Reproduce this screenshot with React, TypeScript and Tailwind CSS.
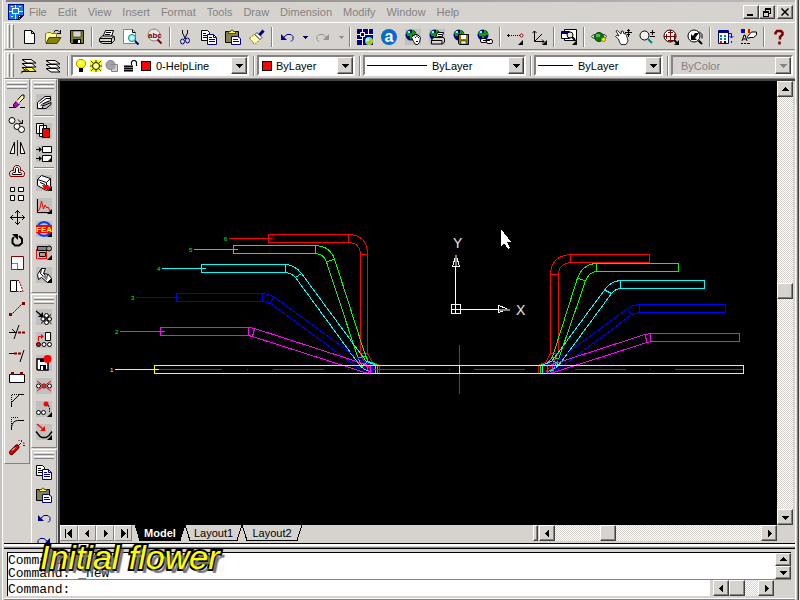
import type { ReactNode } from "react";

const RAISED =
  "border border-t-white border-l-white border-r-[#424142] border-b-[#424142] bg-[#d6d3ce] shadow-[inset_-1px_-1px_#848284]";
const TRACK =
  "bg-[repeating-conic-gradient(#ffffff_0_25%,#d6d3ce_0_50%)] bg-[length:2px_2px]";

const corner = <path d="M16 11v5h-5z" fill="#000" />;
const grey = <path d="M0 0h16v16H0z" fill="#c0c0c0" />;
const globe = (
  <>
    <circle cx="6" cy="6" r="5.5" fill="#000084" />
    <path d="M2 2h3v2h4v3H7v3H5V7H2V5H1V4zM8 1l3 3v2H9V4H7V1z" fill="#00a300" />
    <path d="M3 2h2v2H3z" fill="#8ff" />
  </>
);

const ICONS: Record<string, ReactNode> = {
  New: <path d="M3.5 1.5h7l3 3v10h-10zM10.5 1.5v3h3" fill="#fff" stroke="#000" />,
  Open: (
    <>
      <path d="M.5 13.500v-9h1l1-1h3l1 1h5v4" fill="#ffff9c" stroke="#848200" />
      <path d="M1 14.500l3-6h12l-4 6z" fill="#848200" stroke="#424100" />
      <path d="M9 3.500l1-2h3l2 2M15.5 1v4M12 4.500h4" fill="none" stroke="#000" />
    </>
  ),
  Save: (
    <>
      <path d="M1.5 1.5h13v13h-12l-1-1z" fill="#848200" stroke="#000" />
      <path d="M4 2h8v6H4z" fill="#d6d3ce" stroke="#000" strokeWidth=".5" />
      <path d="M4 10h8v5H4z" fill="#000" />
      <path d="M9 11h2v3H9z" fill="#fff" />
    </>
  ),
  Print: (
    <>
      <path d="M4 7.500l2.5-6h8l-2 6z" fill="#fff" stroke="#000" />
      <path d="M7 3.500h5M6 5.500h5" stroke="#000" />
      <path d="M.5 9.500l3-2.500h11l1 1.500v3l-3 3h-9l-3-2z" fill="#d6d3ce" stroke="#000" />
      <path d="M1 9.500h11.500v5M1 12.500h11M12.5 9.500l3-2" stroke="#000" fill="none" />
      <path d="M6 10.500h3v1H6z" fill="#ff0" />
    </>
  ),
  "Print preview": (
    <>
      <path d="M.5.5h9l3 3v11H.5z" fill="#fff" stroke="#848284" />
      <path d="M9.5.5v3h3" fill="none" stroke="#000" />
      <circle cx="9" cy="9" r="3.5" fill="#9ff" stroke="#008284" />
      <path d="M8 8h2v2H8z" fill="#fff" />
      <path d="M12 12l3.500 3.500" stroke="#000084" strokeWidth="2" />
    </>
  ),
  "Find and replace": (
    <>
      <circle cx="7" cy="6" r="6" fill="#e8e6e2" stroke="#848284" />
      <path d="M10.5 10.500l4 4" stroke="#840000" strokeWidth="2" />
      <text x="1" y="9" fontSize="8" fontWeight="700" fill="#840000">abc</text>
    </>
  ),
  Cut: (
    <>
      <path d="M5.5 1v3l3 6M10.5 1v3l-3 6" stroke="#000" fill="none" />
      <ellipse cx="5.500" cy="12.500" rx="2" ry="2.500" fill="none" stroke="#000084" />
      <ellipse cx="10.500" cy="11.500" rx="2" ry="2.500" fill="none" stroke="#000084" />
    </>
  ),
  Copy: (
    <>
      <path d="M.5 1.500h6l2 2v8h-8z" fill="#fff" stroke="#000" />
      <path d="M2 4.500h3M2 6.500h4M2 8.500h4" stroke="#000" />
      <path d="M6.500 5.500h6l3 3v7h-9z" fill="#fff" stroke="#000084" />
      <path d="M12.500 5.500v3h3M8 8.500h3M8 10.500h6M8 12.500h6" stroke="#000084" fill="none" />
    </>
  ),
  Paste: (
    <>
      <path d="M.5 2.500h13v11H.5z" fill="#84824a" stroke="#000" />
      <path d="M3.500 4.500v-2h2l1-1.500h1l1 1.500h2v2z" fill="#ff0" stroke="#424142" />
      <path d="M6.500 7.500h6l3 2v6h-9z" fill="#fff" stroke="#000084" />
      <path d="M8 10.500h5M8 12.500h6" stroke="#000084" />
    </>
  ),
  "Match properties": (
    <>
      <path d="M.5 9l5-3.500 5 5-4 4.500h-2L4 12.500 2.500 12z" fill="#ffffb5" stroke="#848200" strokeDasharray="2 1" />
      <path d="M6 5.500l2-2 5 5-2 2z" fill="#fff" stroke="#424142" />
      <path d="M10.500 6l4-4.500" stroke="#000084" strokeWidth="3" />
    </>
  ),
  Undo: (
    <>
      <path d="M2 5v6h6z" fill="#000084" />
      <path d="M4.500 8.500l3.500-3h4l2 2v3l-2 2" fill="none" stroke="#000084" />
    </>
  ),
  Redo: (
    <>
      <path d="M14 5v6H8z" fill="#949294" />
      <path d="M11.500 8.500L8 5.500H4l-2 2v3l2 2" fill="none" stroke="#949294" />
    </>
  ),
  RedoBlue: (
    <>
      <path d="M14 5v6H8z" fill="#000084" />
      <path d="M11.500 8.500L8 5.500H4l-2 2v3l2 2" fill="none" stroke="#000084" />
    </>
  ),
  Today: (
    <>
      <path d="M0 0h16v16H0z" fill="#000084" />
      <path d="M0 5.500h3M5.500 0v3M3.500 3.500h4v4h-4zM8 5.500h8M11.500 0v5M5.500 8v8M0 10.500h5" fill="none" stroke="#fff" />
      <circle cx="12" cy="12" r="4" fill="#7fe36b" />
      <path d="M9 14l6-5v4l-2 3z" fill="#d6b400" />
      <path d="M9 9h3v3H9z" fill="#8ff" />
    </>
  ),
  "Point A": (
    <>
      <circle cx="8" cy="8" r="8" fill="#0869ce" />
      <text x="8" y="13" fontSize="16" fontWeight="700" textAnchor="middle" fill="#fff">a</text>
    </>
  ),
  Meet: (
    <>
      {grey}
      {globe}
      <path d="M6.500 8.500l3-3h3l3 3-1 5-2 2h-2l-2-3z" fill="#fff" stroke="#000" />
      <path d="M10 8.500h1M13 8.500h1M11 12.500h2M7 6l3 1M12 6v2" stroke="#000" />
    </>
  ),
  Publish: (
    <>
      {grey}
      {globe}
      <path d="M6.500 9l2-5.500h6l-2 5.500z" fill="#fff" stroke="#000" />
      <path d="M9 5.500h4M8.500 7.500h4" stroke="#000" />
      <path d="M2.500 11l2-2.500h10l1 1.500v3l-2 2h-11z" fill="#d6d3ce" stroke="#000" />
      <path d="M3 11.500h10v3.500" stroke="#000" fill="none" />
      <path d="M5 12h4v1H5z" fill="#ff0" />
    </>
  ),
  eTransmit: (
    <>
      {globe}
      <path d="M5.500 5.500h10v10h-9l-1-1z" fill="#848200" stroke="#000" />
      <path d="M8 6h5v4H8z" fill="#fff" />
      <path d="M8 12h5v3H8z" fill="#fff" stroke="#000" strokeWidth=".5" />
    </>
  ),
  Hyperlink: (
    <>
      {globe}
      <rect x="3.500" y="9.500" width="6" height="4" rx="1.500" fill="#fff" stroke="#000" />
      <rect x="9.500" y="10.500" width="6" height="4" rx="1.500" fill="#fff" stroke="#000" />
      <path d="M6 11.500h7" stroke="#000" />
    </>
  ),
  "Temporary track": (
    <>
      <path d="M0 6.500h3M1.500 5v3" stroke="#000" />
      <path d="M4 6.500h9" stroke="#000" strokeDasharray="1 1" />
      <circle cx="14.500" cy="6.500" r="1.500" fill="#fff" stroke="#840000" />
      {corner}
    </>
  ),
  UCS: (
    <>
      <path d="M3.500 2v10.500H13M4 12l7-7M1.500 4l2-2 2 2M11 10.500l2 2-2 2" fill="none" stroke="#000" />
      {corner}
    </>
  ),
  "Named views": (
    <>
      <path d="M3.500.5h12v11h-12z" fill="#fff" stroke="#000" />
      <path d="M.5 2.500h8v7h-8z" fill="#fff" stroke="#000" />
      <path d="M1 3h7v2H1z" fill="#000084" />
      <circle cx="9" cy="6" r="3" fill="#e8e6e2" stroke="#000" />
      <path d="M11 8l3 3" stroke="#000" strokeWidth="2" />
      {corner}
    </>
  ),
  "3D orbit": (
    <>
      <circle cx="8" cy="8" r="4.500" fill="#008200" stroke="#004100" />
      <path d="M5 5h4v3H5z" fill="#42c342" />
      <ellipse cx="8" cy="7.500" rx="7.500" ry="2.500" fill="none" stroke="#424142" strokeDasharray="9 4" />
      <circle cx="12.500" cy="10.500" r="2" fill="#ff0" stroke="#848200" />
    </>
  ),
  Pan: (
    <>
      <path d="M3.500 10L.5 7.500 2 6l2 1-3-5 1.500-.5L6 5l.500-3L8 2l1 3 1.500-.5L12 8l1 4-2 3.500H6L4.500 13z" fill="#fff" stroke="#000" strokeWidth=".8" />
      <path d="M13.500 0v8M10 3.500h7M12 1.500h3M12 5.500h3" stroke="#000" />
    </>
  ),
  "Zoom realtime": (
    <>
      <circle cx="5.500" cy="6.500" r="4.500" fill="#f4f2ee" stroke="#000" />
      <path d="M9 10l4 4" stroke="#008284" strokeWidth="2" />
      <path d="M11 3.500h5M13.500 1v5M11 7.500h5" stroke="#000" />
    </>
  ),
  "Zoom window": (
    <>
      <circle cx="7" cy="7" r="6" fill="#fff" stroke="#000" />
      <path d="M11 11l3 3" stroke="#000" strokeWidth="2" />
      <path d="M7.500 1v12M1 7.500h12M3.500 5v5M11.500 5v5M5 3.500h5M5 11.500h5" stroke="#840000" fill="none" />
      {corner}
    </>
  ),
  "Zoom previous": (
    <>
      <circle cx="7" cy="7" r="6" fill="#fff" stroke="#000" />
      <path d="M4 5v6h6L8 9l4-5H8L6 7z" fill="#000" />
      <path d="M11.500 11.500l3.500 3.500" stroke="#000" strokeWidth="2" />
      <path d="M12 2.500l3 3v4" stroke="#000" fill="none" />
    </>
  ),
  DesignCenter: (
    <>
      <path d="M1.500 1.500h10v13h-10z" fill="#fff" stroke="#000084" />
      <path d="M2 2h9v2H2z" fill="#000084" />
      <path d="M3 6h2v2H3zM7 6h2v2H7zM3 9h2v2H3zM7 9h2v2H7z" fill="#008284" />
      <path d="M3 12h2v2H3z" fill="red" />
      <path d="M7 12h2v2H7z" fill="#000" />
      <path d="M12 4.500h2.500v4M12.500 7l2 2 2-2M14.500 12v2" stroke="#00f" fill="none" />
    </>
  ),
  Properties: (
    <>
      <path d="M0 0h4v4H0z" fill="#00f" />
      <path d="M4 0h3v4H4z" fill="#ff0" />
      <path d="M7 0h2v4H7z" fill="red" />
      <path d="M6.500 7.500l4-4.500h5v3l-3 2.500H9l-2 1z" fill="#fff" stroke="#000" />
      <path d="M1 12l2-6h1l2 6M2 10h3M0 14.500h2M3 14.500h2M6 14.500h3" stroke="#000" fill="none" />
    </>
  ),
  Help: (
    <path d="M4.500 5.500V4l1.500-2h4l1.500 1.500v2L9 8v2.500M8.500 12.500v3" fill="none" stroke="#840000" strokeWidth="2.500" />
  ),
  Layers: (
    <>
      <path d="M4.500 10.500l4 3h-8M1 9.500h10l4 4H6z" fill="#ff0" stroke="#000" />
      <path d="M1 5.500h10l4 3.500H6z" fill="#fff" stroke="#000" />
      <path d="M1 1.500h9l5 3.500H6z" fill="#fff" stroke="#000" />
      <path d="M0 15.500l4-4" stroke="#000" />
    </>
  ),
  "Layer previous": (
    <>
      <path d="M1 10.500h10l4 3.500H6z" fill="#fff" stroke="#000" />
      <path d="M1 6.500h10l4 3.500H6z" fill="#fff" stroke="#000" />
      <path d="M1 2.500h9l5 3.500H6z" fill="#fff" stroke="#000" />
    </>
  ),
  Erase: (
    <>
      <path d="M0 13.500h5M11 13.500h5" stroke="#000" />
      <path d="M8 6.500l5-5.500h2v3l-5 5z" fill="#ffff84" stroke="#000" />
      <path d="M4.500 10.500l3-3.500 3 3-3.500 3.500h-2z" fill="#c600c6" stroke="#000" />
      <path d="M7.500 6.500l3 3" stroke="#fff" strokeWidth="1.500" />
    </>
  ),
  "Copy object": (
    <>
      <circle cx="3" cy="3.500" r="3" fill="#fff" stroke="#000" />
      <circle cx="8" cy="9.500" r="3" fill="#fff" stroke="#000" />
      <circle cx="12.500" cy="12.500" r="3" fill="#fff" stroke="#000" />
      <path d="M9 2.500l4 4M13.500 3v3.500H10" stroke="#000" fill="none" />
    </>
  ),
  Mirror: (
    <>
      <path d="M1 13.500h4.500V2zM16 13.500h-4.500V2z" fill="#fff" stroke="#000" />
      <path d="M8.500 0v16" stroke="#840000" />
    </>
  ),
  Offset: (
    <>
      <path d="M1.500 13.500l-1-2v-2l2-2h2V4.500l2-2h3l2 2v3h2l2 2v2l-1 2z" fill="none" stroke="#840000" />
      <path d="M3.500 11.500v-1l1-1h2v-4l1-1h1l1 1v4h2l1 1v1z" fill="#fff" stroke="#000" />
    </>
  ),
  Array: <path d="M1.500 1.500h4v4h-4zM9.500 1.500h5v4h-5zM1.500 9.500h4v5h-4zM9.500 9.500h5v5h-5z" fill="#fff" stroke="#000" />,
  Move: (
    <path d="M8.500 1v15M1 8.500h15M6 4l2.500-2.500L11 4M6 13l2.500 2.500L11 13M4 6L1.500 8.500 4 11M13 6l2.500 2.500L13 11" fill="none" stroke="#000" />
  ),
  Rotate: (
    <>
      <path d="M5 5L3.500 7v4L6 13.500h4l3-2.500V7l-3-3" fill="none" stroke="#000" strokeWidth="2" />
      <path d="M3 2h6v6z" fill="#000" />
    </>
  ),
  Scale: (
    <>
      <path d="M2.500 1.500h12v13h-12z" fill="#fff" stroke="#840000" />
      <path d="M2.500 8.500h6v6h-6z" fill="#fff" stroke="#000" strokeDasharray="1 1" />
    </>
  ),
  Stretch: (
    <>
      <path d="M1.500 2.500h6v11h-6z" fill="#fff" stroke="#000" />
      <path d="M8 2.500h2l4 11H8" fill="#fff" stroke="#840000" strokeDasharray="2 1" />
    </>
  ),
  Lengthen: (
    <>
      <path d="M2 14L14 2" stroke="#000" strokeDasharray="2 1" />
      <path d="M0 12h3v3H0zM13 1h3v3h-3z" fill="#840000" />
    </>
  ),
  Trim: (
    <>
      <path d="M0 8.500h8M5 15l5-14M3 5l4 4" stroke="#000" fill="none" />
      <path d="M9 8.500h7" stroke="#840000" strokeWidth="2" strokeDasharray="3 1" />
    </>
  ),
  Extend: (
    <>
      <path d="M0 6.500h5M11 15l4-12" stroke="#000" fill="none" />
      <path d="M5 6.500h7" stroke="#840000" strokeWidth="2" strokeDasharray="3 1" />
    </>
  ),
  Break: (
    <>
      <path d="M.5 4.500h15v8H.5z" fill="#fff" stroke="#000" />
      <path d="M2 2h3v3H2zM11 2h3v3h-3z" fill="#840000" />
    </>
  ),
  Chamfer: (
    <>
      <path d="M2.500 14V9.500l8-8H15" fill="none" stroke="#000" />
      <path d="M2.500 9V1.500H10" fill="none" stroke="#000" strokeDasharray="1 1" />
    </>
  ),
  Fillet: (
    <>
      <path d="M2.500 14v-3q1-6 6-6.500H15" fill="none" stroke="#000" />
      <path d="M2.500 10V1.500H10" fill="none" stroke="#000" strokeDasharray="1 1" />
    </>
  ),
  Explode: (
    <>
      <path d="M2.500 13.500L8 8" stroke="#420000" strokeWidth="5" strokeLinecap="round" />
      <path d="M2.500 13.500L8 8" stroke="#ef0000" strokeWidth="3" strokeLinecap="round" />
      <path d="M3 11.500l3-3" stroke="#fff" />
      <path d="M10 6l2-2M12.500 1v2M15.500 4H14M10 1v1M14 6.500h2" stroke="#840000" fill="none" />
    </>
  ),
  Tube: (
    <>
      {grey}
      <path d="M1.500 8.500L9 2.500h5.500v4L8 9.500l-2 5H1.500z" fill="#fff" stroke="#000" />
      <path d="M3.500 9.500L10 4.500h4M5.500 10.500L13 7M2 14.500h8l5-4v-2l-7 3H5" fill="none" stroke="#000" />
      <path d="M4 12l9-4" stroke="#848284" />
    </>
  ),
  Sheets: (
    <>
      {grey}
      <path d="M.5.5h7v10h-7zM3.500 2.500h7v11h-7z" fill="#fff" stroke="#000" />
      <path d="M6.500 5.500h7v9h-7z" fill="red" stroke="#000" />
    </>
  ),
  "Insert rows": (
    <>
      {grey}
      <path d="M6.500.5h9v6h-9zM6.500 9.500h9v6h-9z" fill="#fff" stroke="#000" />
      <path d="M0 3.500h4M0 12.500h4" stroke="#000" />
      <path d="M3 1l3 2.500L3 6zM3 10l3 2.500L3 15z" fill="#000" />
      {corner}
    </>
  ),
  Machine: (
    <>
      {grey}
      <path d="M1.500 4.500l4-4 9 3v8l-4 4-9-5z" fill="#fff" stroke="#000" />
      <path d="M1.500 4.500l9 3 4-4M10.500 7.500v7M4 7.500l5 2" fill="none" stroke="#000" />
      <path d="M6 10h6l2 2v2H8z" fill="red" />
      {corner}
    </>
  ),
  Graph: (
    <>
      {grey}
      <path d="M1.500 1v13.500H15" fill="none" stroke="#000" />
      <path d="M2 13l2-3 1.500-7 2 8 1.500-4 2 3 1-1 2 4" fill="none" stroke="red" />
      {corner}
    </>
  ),
  FEA: (
    <>
      {grey}
      <path d="M2 4q6-6 12 0M2 12q6 6 12 0" fill="none" stroke="#0041ff" strokeWidth="2" />
      <path d="M0 4h16v8H0z" fill="red" />
      <text x="8" y="11" fontSize="8" fontWeight="700" textAnchor="middle" fill="#ff0">FEA</text>
      {corner}
    </>
  ),
  Roller: (
    <>
      {grey}
      <path d="M1.500 2.500h11v4h-11z" fill="#848284" stroke="#000" />
      <circle cx="13" cy="4.500" r="2.500" fill="#a5a2a5" stroke="#000" />
      <path d="M.5 5v10M10.500 7v8M2 14.500h9" fill="none" stroke="red" />
      <path d="M3.500 8.500h6v4h-6z" fill="#a5a2a5" stroke="#000" />
      {corner}
    </>
  ),
  Profile: (
    <>
      {grey}
      <path d="M1.500 7.500l4-6h4l-2 5 5 1 3 4-4 4-6-5-3 2z" fill="#fff" stroke="#000" />
      <path d="M5.500 1.500l-1 5 6 6M7.500 6.500L9 8M12.500 7.500l-3 4" fill="none" stroke="#000" />
      <path d="M6 9l4-1 2 3-2 2z" fill="#848284" />
      {corner}
    </>
  ),
  "Add stand": (
    <>
      {grey}
      <path d="M0 2l6 5" stroke="#000" strokeWidth="1.500" />
      <path d="M7 3v5H2z" fill="#000" />
      <path d="M5 14.500l10-9M6 5.500l9 9" stroke="#000" />
      <circle cx="10.500" cy="6.500" r="2" fill="#fff" stroke="#000" />
      <circle cx="7" cy="10" r="2" fill="#fff" stroke="#000" />
      <circle cx="13.500" cy="10" r="2" fill="#fff" stroke="#000" />
      <circle cx="10.500" cy="13.500" r="2" fill="#fff" stroke="#000" />
    </>
  ),
  "Move stand": (
    <>
      {grey}
      <path d="M9.500.5h5v8h-5z" fill="#fff" stroke="#000" />
      <path d="M2.500 9V4.500H6" fill="none" stroke="red" />
      <path d="M5 2l3 2.500L5 7z" fill="red" />
      <circle cx="2.500" cy="12.500" r="2" fill="red" stroke="#000" />
      <circle cx="8" cy="12.500" r="2" fill="#fff" stroke="#000" />
      <circle cx="13.500" cy="12.500" r="2" fill="#fff" stroke="#000" />
    </>
  ),
  "Save stand": (
    <>
      {grey}
      <path d="M1 4h11v11H2l-1-1z" fill="#fff" stroke="#000" strokeWidth="1.500" />
      <path d="M4 10h6v5H4zM4 4h4v3H4z" fill="#000" />
      <path d="M5 11h2v4H5z" fill="#fff" />
      <circle cx="11.500" cy="4" r="4" fill="red" />
    </>
  ),
  "Delete stand": (
    <>
      {grey}
      <circle cx="2.500" cy="8" r="2" fill="#fff" stroke="#000" />
      <circle cx="8" cy="8" r="2" fill="#fff" stroke="#000" />
      <circle cx="13.500" cy="8" r="2" fill="#fff" stroke="#000" />
      <path d="M1 3l14 10M15 3L1 13" stroke="red" />
    </>
  ),
  "Next stand": (
    <>
      {grey}
      <circle cx="2.500" cy="11.500" r="2" fill="#fff" stroke="#000" />
      <circle cx="7.500" cy="11.500" r="2" fill="#fff" stroke="#000" />
      <circle cx="10" cy="3" r="2.500" fill="red" />
      <path d="M12 4l1.500 3v4" stroke="#000" strokeDasharray="2 1" fill="none" />
      {corner}
    </>
  ),
  Bend: (
    <>
      {grey}
      <path d="M0 7.500l4 5 2 1h4l3-2 3-4" fill="none" stroke="#000" strokeWidth="1.500" />
      <path d="M1 0l6 5" stroke="red" strokeWidth="1.500" fill="none" />
      <path d="M9 2v5H4z" fill="red" />
      {corner}
    </>
  ),
};

const STANDARD = [
  "New", "Open", "Save", "|", "Print", "Print preview", "Find and replace", "|",
  "Cut", "Copy", "Paste", "Match properties", "|", "Undo", "v", "Redo", "w", "|",
  "Today", "Point A", "Meet", "Publish", "eTransmit", "Hyperlink", "|",
  "Temporary track", "UCS", "|", "Named views", "|",
  "3D orbit", "Pan", "Zoom realtime", "Zoom window", "Zoom previous", "|",
  "DesignCenter", "Properties", "|", "Help",
];
const MODIFY = [
  "Erase", "Copy object", "Mirror", "Offset", "Array", "Move", "Rotate", "Scale",
  "Stretch", "Lengthen", "Trim", "Extend", "Break", "Chamfer", "Fillet", "Explode",
];
const PROFILE = ["Tube", "|", "Sheets", "Insert rows", "|", "Machine", "Graph", "FEA", "Roller", "Profile"];
const STANDS = ["Add stand", "Move stand", "Save stand", "Delete stand", "Next stand", "Bend"];
const EDIT = ["Copy", "Paste", "Undo", "RedoBlue"];
const MENUS = ["File", "Edit", "View", "Insert", "Format", "Tools", "Draw", "Dimension", "Modify", "Window", "Help"];

function Icon({ name }: { name: string }) {
  return (
    <svg width="16" height="16" viewBox="0 0 16 16" aria-hidden="true" className="shrink-0 overflow-visible">
      {ICONS[name]}
    </svg>
  );
}

function Triangle({ dir, color = "#000" }: { dir: "up" | "down" | "left" | "right" | "first" | "last"; color?: string }) {
  const d = {
    up: "M1 6h7v-1h-1v-1h-1v-1h-1v-1h-1v1h-1v1h-1v1h-1z",
    down: "M1 3h7v1h-1v1h-1v1h-1v1h-1v-1h-1v-1h-1v-1h-1z",
    left: "M6 1v7h-1v-1h-1v-1h-1v-1h-1v-1h1v-1h1v-1h1v-1z",
    right: "M3 1v7h1v-1h1v-1h1v-1h1v-1h-1v-1h-1v-1h-1v-1z",
    first: "M0 0h1v9h-1zM7 0v9L2 4.5z",
    last: "M8 0h1v9h-1zM2 0v9L7 4.5z",
  }[dir];
  return (
    <svg width="9" height="9" viewBox="0 0 9 9" shapeRendering="crispEdges" aria-hidden="true" className="shrink-0">
      <path d={d} fill={color} />
    </svg>
  );
}

function Tool({ name }: { name: string }) {
  return (
    <button aria-label={name} className="flex h-6 w-6 shrink-0 items-center justify-center">
      <Icon name={name} />
    </button>
  );
}

function Grip() {
  return (
    <div className="ml-0.5 flex h-6 shrink-0 gap-px">
      <span className="w-[3px] border-t border-l border-r border-white border-r-[#848284]" />
      <span className="w-[3px] border-t border-l border-r border-white border-r-[#848284]" />
    </div>
  );
}

function Divider() {
  return (
    <div className="flex h-5 w-1.5 shrink-0 justify-center">
      <span className="w-0.5 border-l border-r border-l-[#848284] border-r-white" />
    </div>
  );
}

function Palette({ tools, className = "" }: { tools: string[]; className?: string }) {
  return (
    <div className={`w-[26px] border border-t-white border-l-white border-r-[#848284] border-b-[#848284] ${className}`}>
      <div className="mx-0.5 mt-0.5 mb-px flex flex-col gap-px">
        <span className="h-[3px] border-t border-b border-t-white border-b-[#848284]" />
        <span className="h-[3px] border-t border-b border-t-white border-b-[#848284]" />
      </div>
      {tools.map((t, i) =>
        t === "|" ? (
          <div key={i} className="mx-0.5 flex h-1.5 flex-col justify-center">
            <span className="h-0.5 border-t border-b border-t-[#848284] border-b-white" />
          </div>
        ) : (
          <button key={i} aria-label={t} className="flex h-[23px] w-6 items-center justify-center">
            <Icon name={t} />
          </button>
        ),
      )}
    </div>
  );
}

function Combo({
  label,
  value,
  className,
  disabled = false,
  children,
}: {
  label: string;
  value: string;
  className: string;
  disabled?: boolean;
  children?: ReactNode;
}) {
  return (
    <div
      className={`flex h-[21px] items-center border-2 border-t-[#848284] border-l-[#848284] border-r-white border-b-white ${
        disabled ? "bg-[#d6d3ce] text-[#848284]" : "bg-white text-black"
      } ${className}`}
    >
      {children}
      <select
        aria-label={label}
        disabled={disabled}
        className="min-w-0 flex-1 appearance-none bg-transparent opacity-100 outline-none"
      >
        <option>{value}</option>
      </select>
      <span className={`pointer-events-none flex h-[17px] w-4 shrink-0 items-center justify-center ${RAISED}`}>
        <Triangle dir="down" color={disabled ? "#848284" : "#000"} />
      </span>
    </div>
  );
}

function ScrollButton({ dir, className = "h-4 w-4" }: { dir: "up" | "down" | "left" | "right"; className?: string }) {
  return (
    <button aria-label={`Scroll ${dir}`} className={`flex shrink-0 items-center justify-center ${RAISED} ${className}`}>
      <Triangle dir={dir} />
    </button>
  );
}

// one entry per forming pass: left leader, left leg, right leg
const PASSES = [
  {
    n: "6", color: "#f00", tx: 224, ty: 241, lead: "M229 238.5H273",
    d: "M348.5 234.5H268.5v8H348.5zM348.5 234.5Q367.5 235 367.5 254.5V353.5L372 362 380 365.5M348.5 242.5Q360 243 360.5 254.5V353.5L364 361 373 373M360.5 254.5h7M360.5 353.5h7M379.5 365v8",
    r: "M570.5 254.5H649.5v8H570.5zM570.5 254.5Q551 256 550.5 274.5V353.5L546 362 538 365.5M570.5 262.5Q558.5 264 558.5 274.5V353.5L553 363 545 373M550.5 274.5h8M550.5 353.5h8M538.5 365v8",
  },
  {
    n: "5", color: "#0f0", tx: 189, ty: 252, lead: "M194 249.5H238",
    d: "M315.5 245.5H233.5v8H315.5zM315.5 245.5Q330 246 334.5 259L364 351 368 361 378 365.5M315.5 253.5Q324 254 326.5 262L358 358 363 368 371 373M326.5 262l8-3M358 358l8-2M377.5 365v8",
    r: "M596.5 263.5H678.5v8H596.5zM596.5 263.5Q583 264 577.5 278L552.5 357 548 363 540 365.5M596.5 271.5Q589 272 585.5 281L559 358 554 368 546 373M577.5 278l8 3M552 357l7 2M540.5 365v8",
  },
  {
    n: "4", color: "#0ff", tx: 157, ty: 271, lead: "M162 268.5H206",
    d: "M285.5 264.5H201.5v8H285.5zM285.5 264.5Q295 265 301.5 273.5L366 361 376 365.5M285.5 272.5Q291 273 295.5 277.5L361 367 371 373M295.5 277.5l6-4M361 367l6-5M375.5 365v8",
    r: "M620.5 280.5H704.5v8H620.5zM620.5 280.5Q611 281 604.5 290L552 361 542 365.5M620.5 288.5Q615 289 611.5 293.5L559 365 549 373M604.5 290l7 3.5M553 361l6 4M542.5 365v8",
  },
  {
    n: "3", color: "#00f", tx: 131, ty: 300, lead: "M136 297.5H181",
    d: "M262.5 293.5H176.5v8H262.5zM262.5 293.5Q269 294 273.5 296.5L363 362 374 365.5M262.5 301.5Q267 302 270.5 303.5L364 372 374 373M270.5 303.5l3-7M363 371l4-8M372.5 365v8",
    r: "M639.5 304.5H725.5v8H639.5zM639.5 304.5Q632 305 627.5 308.5L554 363 544 365.5M639.5 312.5Q636 313 632 314.5L556 371 546 373M627.5 308.5l4 6M553 363l4 8M545.5 365v8",
  },
  {
    n: "2", color: "#f0f", tx: 115, ty: 334, lead: "M120 331.5H165",
    d: "M248.5 327.5H160.5v8H248.5zM248.5 327.5L254.5 328.5 366 364.5M248.5 335.5L252.5 336.5 368 373.5M252.5 336.5l2-8M366 364l3 9M370.5 365v8",
    r: "M650.5 333.5H739.5v8H650.5zM650.5 333.5L645 334.5 552 364.5M650.5 341.5L647 342.5 550 373.5M645 334.5l2 8M552 364l2 9M547.5 365v8",
  },
];

function Drawing() {
  return (
    <svg className="block h-full w-full" role="img" aria-label="Flower pattern drawing">
      <g transform="translate(-60 -81)" fill="none" shapeRendering="crispEdges">
        {PASSES.map((p) => (
          <g key={p.n}>
            <path d={p.lead + p.d + p.r} stroke={p.color} />
            <text x={p.tx} y={p.ty} fontSize="6" fill="#0f0">{p.n}</text>
          </g>
        ))}
        <path
          d="M159 369.5H222M247 369.5h1M273 369.5H324M348 369.5h1M373 369.5H425M449 369.5h1M474 369.5H525M550 369.5h1M575 369.5H626M650 369.5h1M675 369.5H743M459.5 345V394"
          stroke="#f00"
        />
        <path d="M154.5 365.5H743.5v8H154.5zM115 369.5H159M459.5 365v8" stroke="#ff0" />
        <text x="110" y="372" fontSize="6" fill="#ff0">1</text>
        <path d="M451.5 304.5h9v9h-9zM455.5 313V267M451 309.500H498M452.5 266.5h7l-3-10h-1zM498.5 305.5v7l8-3v-1z" stroke="#fff" />
        <path d="M455.5 255v11M499 309.5h11" stroke="#848284" strokeWidth="2" />
        <text x="453" y="248" fontSize="14" fill="#e7e7e7">Y</text>
        <text x="516" y="315" fontSize="14" fill="#e7e7e7">X</text>
        <path d="M501 229v17l3-3 4 6 2-1-3-6h4z" fill="#fff" />
      </g>
    </svg>
  );
}

function Tab({ name, width, active = false }: { name: string; width: number; active?: boolean }) {
  return (
    <button role="tab" aria-selected={active} className="relative h-4 shrink-0" style={{ width }}>
      <svg width={width} height="16" shapeRendering="crispEdges" aria-hidden="true" className="absolute inset-0">
        <path
          d={`M0 0L5 15.5H${width - 5}L${width} 0`}
          fill={active ? "#000" : "none"}
          stroke="#000"
        />
      </svg>
      <span className={`relative ${active ? "font-bold text-white" : "text-black"}`}>{name}</span>
    </button>
  );
}

export default function App() {
  return (
    <div className="relative flex h-screen overflow-hidden bg-[#d6d3ce] font-['Liberation_Sans',Arial,sans-serif] text-[11px] leading-4">
      <div className="w-1 shrink-0 border-l-2 border-[#c6c3bd]">
        <div className="h-full w-px bg-white" />
      </div>

      <div className="flex min-w-0 flex-1 flex-col">
        <div className="ml-0.5 h-0.5 shrink-0 bg-linear-to-r from-[#848284] to-[#bdbabd]" />

        <header className="flex h-5 shrink-0 items-center pl-1">
          <svg width="16" height="16" viewBox="0 0 16 16" shapeRendering="crispEdges" aria-hidden="true">
            <path d="M.5.5h15v11l-4 4H.5z" fill="#0082ff" stroke="#000084" />
            <path d="M4.5 4.5h6v5h-6zM7.5 1v3M7.5 10v5M1 7.5h3M11 7.5h4M3 2.5h2M11 2.5h2M3 12.5h2" fill="none" stroke="#fff" />
            <path d="M10 15v-4h5z" fill="#fff" stroke="#000" />
          </svg>
          <nav className="flex flex-1 gap-[11px] pl-[5px] text-[#848284]">
            {MENUS.map((m) => (
              <button key={m}>{m}</button>
            ))}
          </nav>
          <div className="flex pr-0.5">
            <button aria-label="Minimize" className={`flex h-3.5 w-4 items-center justify-center ${RAISED}`}>
              <svg width="8" height="8" shapeRendering="crispEdges"><path d="M0 6h6v2H0z" /></svg>
            </button>
            <button aria-label="Restore" className={`flex h-3.5 w-4 items-center justify-center ${RAISED}`}>
              <svg width="8" height="9" shapeRendering="crispEdges">
                <path d="M2.5 3V.5h5v5H6M2 1.5h6M.5 3.5h5v5h-5zM0 4.5h6" fill="none" stroke="#000" />
              </svg>
            </button>
            <button aria-label="Close" className={`ml-0.5 flex h-3.5 w-4 items-center justify-center ${RAISED}`}>
              <svg width="8" height="8"><path d="M.5.5l7 7M7.5.5l-7 7" stroke="#000" strokeWidth="1.500" /></svg>
            </button>
          </div>
        </header>

        <div className="mb-px flex h-7 shrink-0 items-center border border-t-white border-l-white border-r-transparent border-b-[#848284]">
          <Grip />
          <div className="flex items-center pt-0.5 pl-[3px]">
            {STANDARD.map((t, i) => {
              if (t === "|") return <Divider key={i} />;
              if (t === "v" || t === "w")
                return (
                  <button key={i} aria-label="History" className="flex w-3 justify-center">
                    <svg width="5" height="3" shapeRendering="crispEdges">
                      <path d="M0 0h5v1H4v1H3v1H2V2H1V1H0z" fill={t === "v" ? "#000084" : "#949294"} />
                    </svg>
                  </button>
                );
              return <Tool key={i} name={t} />;
            })}
          </div>
        </div>

        <div className="flex h-7 shrink-0 items-center border border-t-white border-l-white border-r-transparent border-b-[#848284]">
          <Grip />
          <div className="flex flex-1 items-center pt-px pl-[3px]">
            <Tool name="Layers" />
            <Tool name="Layer previous" />
            <Divider />
            <Combo label="Layer" value="0-HelpLine" className="w-[178px] gap-0.5 pl-0.5">
              <svg width="64" height="16" viewBox="0 0 64 16" aria-hidden="true" className="shrink-0">
                <path d="M4 1.5h4l2.500 2.500v3L8 10H4L1.500 7V4z" fill="#ff0" stroke="#a5a200" />
                <path d="M4 10h4v4H4z" fill="#000" />
                <path d="M4 4h2v2H4z" fill="#fff" />
                <path d="M15 2h12v12H15z" fill="#ff0" />
                <circle cx="21" cy="8" r="3.500" fill="#ffff84" stroke="#000" />
                <path d="M21 2v2M21 12v2M15 8h2M25 8h2M16 3l2 2M26 3l-2 2M16 13l2-2M26 13l-2-2" stroke="#424100" />
                <circle cx="35.500" cy="7" r="4.500" fill="#a5a2a5" stroke="#848284" />
                <path d="M36.5 6.5h6v7h-6z" fill="#d6d3ce" stroke="#848284" />
                <circle cx="38" cy="9" r="2.500" fill="#a5a2a5" />
                <path d="M49 7h9v7h-9z" fill="#848200" />
                <path d="M49 8.5h9M49 10.5h9M49 12.5h9M56.5 7V4l1.500-1.500h2L61.500 4v4" fill="none" stroke="#000" strokeWidth="1.200" />
              </svg>
              <span className="h-2.5 w-2.5 shrink-0 border border-black bg-[#f00]" />
              <span className="w-px" />
            </Combo>
            <span className="w-0.5" />
            <Divider />
            <Combo label="Color" value="ByLayer" className="w-[98px] gap-1 pl-[3px]">
              <span className="h-2.5 w-2.5 shrink-0 border border-black bg-[#f00]" />
            </Combo>
            <span className="w-0.5" />
            <Divider />
            <Combo label="Linetype" value="ByLayer" className="w-[163px] gap-[5px] pl-0.5">
              <span className="h-px w-[60px] bg-black" />
            </Combo>
            <span className="w-0.5" />
            <Divider />
            <Combo label="Lineweight" value="ByLayer" className="w-[129px] gap-[5px] pl-0.5">
              <span className="h-px w-[35px] bg-black" />
            </Combo>
            <span className="w-0.5" />
            <Divider />
            <Combo label="Plot style" value="ByColor" disabled className="mr-px flex-1 pl-2" />
          </div>
        </div>

        <main className="flex min-h-0 flex-1">
          <div className="flex shrink-0 gap-px overflow-hidden pr-px">
            <div>
              <Palette tools={MODIFY} className="pb-[5px]" />
            </div>
            <div className="flex flex-col gap-px">
              <Palette tools={PROFILE} className="pb-1.5" />
              <Palette tools={STANDS} className="pb-1" />
              <Palette tools={EDIT} />
            </div>
          </div>

          <div className="flex min-w-0 flex-1 flex-col border-t-2 border-l-2 border-t-[#424142] border-l-[#424142] pb-0.5">
            <div className="flex min-h-0 flex-1">
              <div className="min-w-0 flex-1 bg-black">
                <Drawing />
              </div>
              <div className={`mr-0.5 flex w-4 shrink-0 flex-col ${TRACK}`}>
                <ScrollButton dir="up" />
                <div className="flex-[186]" />
                <div className={`h-4 ${RAISED}`} />
                <div className="flex-[210]" />
                <ScrollButton dir="down" />
              </div>
            </div>
            <div className="flex h-4 shrink-0">
              <div className="flex">
                {(["first", "left", "right", "last"] as const).map((d) => (
                  <button
                    key={d}
                    aria-label={`${d} tab`}
                    className="flex h-4 w-[18px] items-center justify-center border border-t-white border-l-white border-r-[#848284] border-b-[#848284]"
                  >
                    <Triangle dir={d} />
                  </button>
                ))}
              </div>
              <div role="tablist" className="flex flex-1 pl-[3px]">
                <Tab name="Model" width={50} active />
                <Tab name="Layout1" width={57} />
                <Tab name="Layout2" width={60} />
              </div>
              <div className={`mr-px w-[5px] ${RAISED}`} />
              <div className={`mr-[18px] flex w-[238px] ${TRACK}`}>
                <ScrollButton dir="left" />
                <div className="flex-[45]" />
                <div className={`w-4 ${RAISED}`} />
                <div className="flex-[145]" />
                <ScrollButton dir="right" />
              </div>
            </div>
          </div>
        </main>

        <section className="shrink-0 font-['Liberation_Mono','Courier_New',monospace] text-[13px] leading-[13px] text-black">
          <div className="h-1.5 border-t border-b border-black">
            <div className="h-1 border-t-2 border-b border-t-white border-b-[#848284]" />
          </div>
          <div className="mt-[3px] mr-1 ml-[3px] border-t border-l border-t-black border-l-black">
            <div className="flex h-[27px] border-b border-[#848284] bg-white">
              <div className="flex-1 pt-px">
                <p>Command:</p>
                <p>Command: _new</p>
              </div>
              <div className="flex w-4 flex-col">
                <ScrollButton dir="up" className="h-[13px] w-4" />
                <ScrollButton dir="down" className="h-[13px] w-4" />
              </div>
            </div>
            <div className="flex h-4">
              <label htmlFor="command" className="bg-white pt-[3px]">Command:</label>
              <input id="command" className="min-w-0 flex-1 bg-white outline-none" />
              <div className={`mr-[17px] flex w-16 border-l-[3px] border-[#d6d3ce] ${TRACK}`}>
                <ScrollButton dir="left" />
                <div className={`w-4 ${RAISED}`} />
                <div className="flex-1" />
                <ScrollButton dir="right" />
              </div>
            </div>
          </div>
          <div className="mt-0.5 h-0.5 border-t border-b border-t-white border-b-[#848284]" />
        </section>
      </div>

      <div className="flex w-[5px] shrink-0">
        <span className="w-px bg-white" />
        <span className="w-px" />
        <span className="w-px bg-[#848284]" />
        <span className="w-px bg-[#424142]" />
        <span className="w-px bg-[#e7e7e7]" />
      </div>

      <p className="absolute bottom-[26px] left-10 text-[34px] leading-[34px] whitespace-nowrap text-[#ff0] italic [-webkit-text-stroke:4px_#000] [paint-order:stroke_fill] [text-shadow:4px_4px_1px_#737173]">
        Initial flower
      </p>
    </div>
  );
}
